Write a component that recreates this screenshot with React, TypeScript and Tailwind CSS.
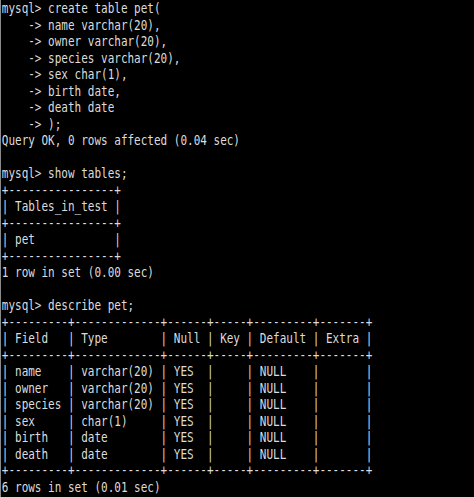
import React from "react";

const lines = [
  "mysql> create table pet(",
  "    -> name varchar(20),",
  "    -> owner varchar(20),",
  "    -> species varchar(20),",
  "    -> sex char(1),",
  "    -> birth date,",
  "    -> death date",
  "    -> );",
  "Query OK, 0 rows affected (0.04 sec)",
  "",
  "mysql> show tables;",
  "+----------------+",
  "| Tables_in_test |",
  "+----------------+",
  "| pet            |",
  "+----------------+",
  "1 row in set (0.00 sec)",
  "",
  "mysql> describe pet;",
  "+---------+-------------+------+-----+---------+-------+",
  "| Field   | Type        | Null | Key | Default | Extra |",
  "+---------+-------------+------+-----+---------+-------+",
  "| name    | varchar(20) | YES  |     | NULL    |       |",
  "| owner   | varchar(20) | YES  |     | NULL    |       |",
  "| species | varchar(20) | YES  |     | NULL    |       |",
  "| sex     | char(1)     | YES  |     | NULL    |       |",
  "| birth   | date        | YES  |     | NULL    |       |",
  "| death   | date        | YES  |     | NULL    |       |",
  "+---------+-------------+------+-----+---------+-------+",
  "6 rows in set (0.01 sec)",
];

export default function App() {
  return (
    <div className="w-[474px] h-[497px] bg-black overflow-hidden border-l border-[#8a8a8a]">
      <pre
        className="m-0 pl-[1px] pt-0 text-[#dcdcdc] text-[14px] leading-[16.5px] whitespace-pre origin-top-left scale-x-[0.785]"
        style={{ fontFamily: '"DejaVu Sans Mono", monospace' }}
      >
        {lines.join("\n")}
      </pre>
    </div>
  );
}
